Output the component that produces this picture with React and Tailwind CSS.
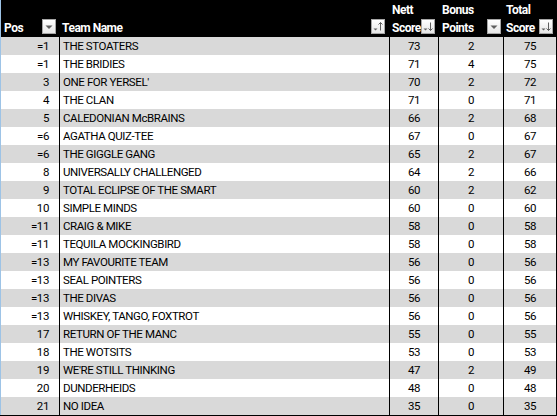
import React from "react";

const rows = [
  ["=1", "THE STOATERS", 73, 2, 75],
  ["=1", "THE BRIDIES", 71, 4, 75],
  ["3", "ONE FOR YERSEL'", 70, 2, 72],
  ["4", "THE CLAN", 71, 0, 71],
  ["5", "CALEDONIAN McBRAINS", 66, 2, 68],
  ["=6", "AGATHA QUIZ-TEE", 67, 0, 67],
  ["=6", "THE GIGGLE GANG", 65, 2, 67],
  ["8", "UNIVERSALLY CHALLENGED", 64, 2, 66],
  ["9", "TOTAL ECLIPSE OF THE SMART", 60, 2, 62],
  ["10", "SIMPLE MINDS", 60, 0, 60],
  ["=11", "CRAIG & MIKE", 58, 0, 58],
  ["=11", "TEQUILA MOCKINGBIRD", 58, 0, 58],
  ["=13", "MY FAVOURITE TEAM", 56, 0, 56],
  ["=13", "SEAL POINTERS", 56, 0, 56],
  ["=13", "THE DIVAS", 56, 0, 56],
  ["=13", "WHISKEY, TANGO, FOXTROT", 56, 0, 56],
  ["17", "RETURN OF THE MANC", 55, 0, 55],
  ["18", "THE WOTSITS", 53, 0, 53],
  ["19", "WE'RE STILL THINKING", 47, 2, 49],
  ["20", "DUNDERHEIDS", 48, 0, 48],
  ["21", "NO IDEA", 35, 0, 35],
];

function FilterButton({ kind }) {
  return (
    <div className="w-[14px] h-[15px] mb-[3px] shrink-0 border border-[#a6a6a6] bg-gradient-to-b from-white to-[#e6e6e6] flex items-center justify-center">
      <svg width="12" height="13" viewBox="0 0 12 13">
        {kind === "drop" && <polygon points="2.5,5.5 9.5,5.5 6,9" fill="#5f5f5f" />}
        {kind !== "drop" && (
          <g>
            <polygon points="1.5,8.5 5.5,8.5 3.5,10.5" fill="#5f5f5f" />
            <line x1="8.5" y1="2.5" x2="8.5" y2="10.5" stroke="#5f5f5f" strokeWidth="1" />
            {kind === "up" ? (
              <polyline points="6.5,4.5 8.5,2.5 10.5,4.5" fill="none" stroke="#5f5f5f" strokeWidth="1" />
            ) : (
              <polyline points="6.5,8.5 8.5,10.5 10.5,8.5" fill="none" stroke="#5f5f5f" strokeWidth="1" />
            )}
          </g>
        )}
      </svg>
    </div>
  );
}

export default function App() {
  return (
    <div className="w-[557px] h-[416px] bg-white overflow-hidden font-['Roboto',sans-serif] text-black">
      <div className="flex h-[37px] bg-black text-white font-bold text-[12px] leading-[18px] tracking-[-0.5px]">
        <div className="w-[60px] border-l border-l-[#9dc3e6] border-r border-r-black flex items-end justify-between pl-[3px] pr-[3px]">
          <span>Pos</span>
          <FilterButton kind="drop" />
        </div>
        <div className="w-[330px] border-r border-r-black flex items-end justify-between pl-[2px] pr-[4px]">
          <span>Team Name</span>
          <FilterButton kind="up" />
        </div>
        <div className="w-[49px] border-r border-r-black flex items-end justify-between pl-[2px] pr-[4px]">
          <span className="flex flex-col">
            <span>Nett</span>
            <span>Score</span>
          </span>
          <FilterButton kind="down" />
        </div>
        <div className="w-[65px] border-r border-r-black flex items-end justify-between pl-[3px] pr-[2px]">
          <span className="flex flex-col">
            <span>Bonus</span>
            <span>Points</span>
          </span>
          <FilterButton kind="drop" />
        </div>
        <div className="w-[53px] border-r border-r-black flex items-end justify-between pl-[2px] pr-[3px]">
          <span className="flex flex-col">
            <span>Total</span>
            <span>Score</span>
          </span>
          <FilterButton kind="down" />
        </div>
      </div>
      <div className="flex flex-col border-b border-b-black text-[11.5px] leading-[18px] tracking-[-0.4px]">
        {rows.map((r, i) => (
          <div key={i} className={i % 2 === 0 ? "flex h-[18px] bg-[#d9d9d9]" : "flex h-[18px] bg-white"}>
            <div className="w-[60px] border-l border-l-[#9dc3e6] border-r border-r-black flex items-center justify-end pr-[10px]">
              {r[0]}
            </div>
            <div className="w-[330px] border-r border-r-black flex items-center pl-[3px]">{r[1]}</div>
            <div className="w-[49px] border-r border-r-black flex items-center justify-center">{r[2]}</div>
            <div className="w-[65px] border-r border-r-black flex items-center justify-center">{r[3]}</div>
            <div className="w-[53px] border-r border-r-black flex items-center justify-center">{r[4]}</div>
          </div>
        ))}
      </div>
    </div>
  );
}
